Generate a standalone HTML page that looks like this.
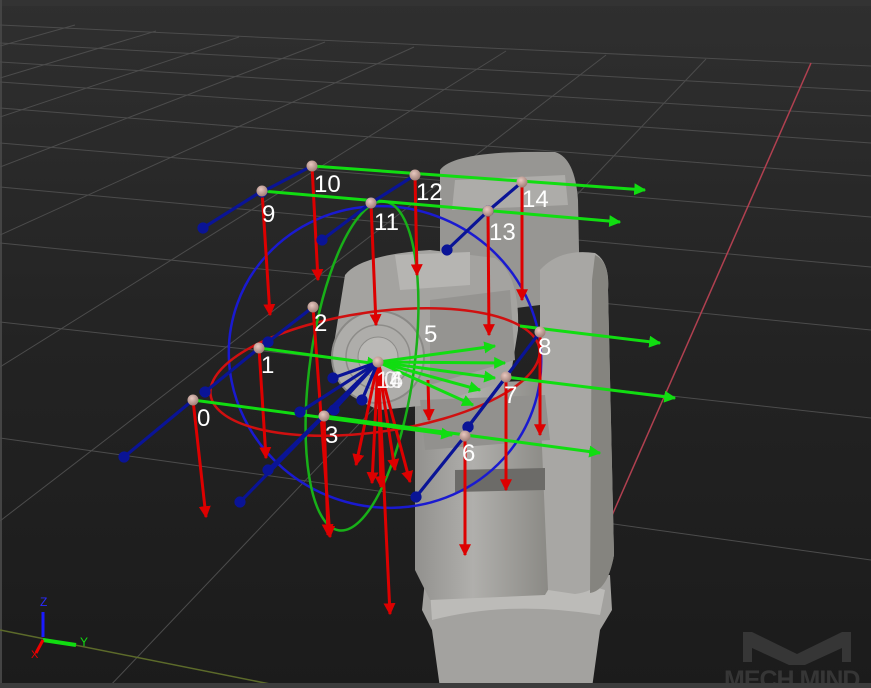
<!DOCTYPE html>
<html><head><meta charset="utf-8"><style>
html,body{margin:0;padding:0;background:#1c1c1c;}
svg{display:block}
text{font-family:"Liberation Sans","DejaVu Sans",sans-serif;}
</style></head><body>
<svg width="871" height="688" viewBox="0 0 871 688" xmlns="http://www.w3.org/2000/svg">
<defs>
<linearGradient id="bg" x1="0" y1="0" x2="0" y2="1">
<stop offset="0" stop-color="#2f2f2f"/><stop offset="0.5" stop-color="#232323"/><stop offset="1" stop-color="#1b1b1b"/>
</linearGradient>
<linearGradient id="rb" x1="0" y1="0" x2="1" y2="0">
<stop offset="0" stop-color="#92918e"/><stop offset="0.4" stop-color="#b0afac"/><stop offset="1" stop-color="#85847f"/>
</linearGradient>
<radialGradient id="ball" cx="0.4" cy="0.35" r="0.7"><stop offset="0" stop-color="#e8c8c0"/><stop offset="1" stop-color="#9a7a72"/></radialGradient>
<marker id="ar" viewBox="0 0 10 10" refX="9" refY="5" markerWidth="4" markerHeight="4" orient="auto"><path d="M0,0 L10,5 L0,10 z" fill="#d00"/></marker>
<marker id="ag" viewBox="0 0 10 10" refX="9" refY="5" markerWidth="4" markerHeight="4" orient="auto"><path d="M0,0 L10,5 L0,10 z" fill="#1d1"/></marker>
<marker id="ab" viewBox="0 0 10 10" refX="5" refY="5" markerWidth="3.5" markerHeight="3.5" orient="auto"><circle cx="5" cy="5" r="5" fill="#0a1496"/></marker>
</defs>
<rect width="871" height="688" fill="url(#bg)"/>
<rect width="871" height="6" fill="#333"/>
<rect y="0" width="2" height="688" fill="#444"/>
<g stroke="#4c4c4c" stroke-width="1" fill="none">
<line x1="0" y1="25" x2="871" y2="66"/>
<line x1="0" y1="43" x2="871" y2="91"/>
<line x1="0" y1="62" x2="871" y2="116"/>
<line x1="0" y1="82" x2="871" y2="143"/>
<line x1="0" y1="108" x2="871" y2="176"/>
<line x1="0" y1="143" x2="871" y2="217"/>
<line x1="0" y1="187" x2="871" y2="267"/>
<line x1="0" y1="243" x2="871" y2="330"/>
<line x1="0" y1="322" x2="871" y2="418"/>
<line x1="0" y1="438" x2="871" y2="560"/>
<line x1="75" y1="25" x2="0" y2="46"/>
<line x1="156" y1="31" x2="0" y2="78"/>
<line x1="239" y1="37" x2="0" y2="117"/>
<line x1="325" y1="42" x2="0" y2="167"/>
<line x1="414" y1="47" x2="0" y2="235"/>
<line x1="506" y1="51" x2="0" y2="367"/>
<line x1="606" y1="55" x2="0" y2="521"/>
<line x1="706" y1="59" x2="108" y2="688"/>
</g>
<line x1="0" y1="630" x2="290" y2="688" stroke="#5c6a2a" stroke-width="1.5"/>
<line x1="811" y1="63" x2="610" y2="520" stroke="#b04050" stroke-width="1.5"/>
<!-- robot -->
<g>
<path d="M425,580 L610,575 L612,610 L600,630 L592,688 L440,688 L432,630 L422,610 Z" fill="#a3a29f"/>
<path d="M430,590 Q510,560 605,590 L600,615 Q510,600 432,620 Z" fill="#bcbbb8"/>
<path d="M415,385 L555,380 L560,570 L545,595 L430,600 L415,570 Z" fill="url(#rb)"/>
<path d="M440,170 Q455,150 555,152 Q575,158 578,200 L580,300 L500,310 L440,280 Z" fill="#979693"/>
<path d="M455,180 L565,175 L568,205 L452,210 Z" fill="#adaca9"/>
<path d="M540,270 Q560,248 595,253 Q610,262 608,290 L614,555 Q608,590 575,594 L548,590 L540,400 Z" fill="#a8a7a4"/>
<path d="M595,255 Q610,262 608,290 L614,555 Q608,590 590,593 L592,280 Z" fill="#85847f"/>
<path d="M345,275 Q360,255 430,250 L495,258 Q520,275 518,330 L510,380 L430,405 L380,410 Q335,395 333,350 Z" fill="#a4a3a0"/>
<path d="M395,255 L470,252 L470,285 L400,290 Z" fill="#b6b5b2"/>
<path d="M430,300 L510,290 L515,360 L430,385 Z" fill="#959491"/>
<circle cx="378" cy="357" r="46" fill="#aeadaa" stroke="#8a8986" stroke-width="2"/>
<circle cx="378" cy="357" r="32" fill="none" stroke="#8d8c89" stroke-width="1.5"/>
<circle cx="378" cy="357" r="20" fill="#bab9b6" stroke="#8d8c89"/>
<path d="M420,400 L545,395 L550,440 L425,450 Z" fill="#92918e"/>
<path d="M455,470 L545,468 L545,490 L455,492 Z" fill="#6c6b68"/>
</g>
<!-- ellipses -->
<g fill="none" stroke-width="2.5">
<ellipse cx="385" cy="357" rx="157" ry="150" transform="rotate(20 385 357)" stroke="#1a1ad0"/>
<ellipse cx="375" cy="372" rx="166" ry="60" transform="rotate(-8 375 372)" stroke="#d01010"/>
<ellipse cx="362" cy="366" rx="52" ry="166" transform="rotate(8 362 366)" stroke="#18b018"/>
</g>
<!-- red arrows -->
<g stroke="#d00" stroke-width="3" marker-end="url(#ar)">
<line x1="193" y1="400" x2="206" y2="517"/>
<line x1="259" y1="348" x2="266" y2="458"/>
<line x1="313" y1="307" x2="330" y2="537"/>
<line x1="324" y1="416" x2="328" y2="535"/>
<line x1="465" y1="436" x2="465" y2="555"/>
<line x1="506" y1="377" x2="506" y2="490"/>
<line x1="540" y1="332" x2="540" y2="435"/>
<line x1="262" y1="191" x2="270" y2="315"/>
<line x1="312" y1="166" x2="318" y2="280"/>
<line x1="371" y1="203" x2="376" y2="325"/>
<line x1="415" y1="175" x2="417" y2="275"/>
<line x1="488" y1="211" x2="489" y2="335"/>
<line x1="522" y1="182" x2="522" y2="300"/>
<line x1="378" y1="362" x2="356" y2="465"/>
<line x1="378" y1="362" x2="372" y2="483"/>
<line x1="378" y1="362" x2="381" y2="487"/>
<line x1="378" y1="362" x2="390" y2="614"/>
<line x1="378" y1="362" x2="395" y2="470"/>
<line x1="378" y1="362" x2="410" y2="482"/>
<line x1="428" y1="380" x2="429" y2="420"/>
</g>
<!-- green arrows -->
<g stroke="#1d1" stroke-width="3" marker-end="url(#ag)">
<line x1="193" y1="400" x2="452" y2="435"/>
<line x1="259" y1="348" x2="378" y2="364"/>
<line x1="324" y1="416" x2="600" y2="453"/>
<line x1="506" y1="377" x2="675" y2="398"/>
<line x1="520" y1="326" x2="660" y2="343"/>
<line x1="262" y1="191" x2="620" y2="222"/>
<line x1="312" y1="166" x2="645" y2="190"/>
<line x1="378" y1="362" x2="495" y2="346"/>
<line x1="378" y1="362" x2="505" y2="363"/>
<line x1="378" y1="362" x2="495" y2="378"/>
<line x1="378" y1="362" x2="480" y2="390"/>
<line x1="378" y1="362" x2="473" y2="405"/>
</g>
<!-- blue arrows -->
<g stroke="#0a1496" stroke-width="3.2" marker-end="url(#ab)">
<line x1="193" y1="400" x2="124" y2="457"/>
<line x1="259" y1="348" x2="205" y2="392"/>
<line x1="313" y1="307" x2="268" y2="342"/>
<line x1="324" y1="416" x2="240" y2="502"/>
<line x1="465" y1="436" x2="416" y2="497"/>
<line x1="540" y1="332" x2="468" y2="427"/>
<line x1="506" y1="377" x2="468" y2="427"/>
<line x1="262" y1="191" x2="203" y2="228"/>
<line x1="312" y1="166" x2="262" y2="192"/>
<line x1="371" y1="203" x2="322" y2="240"/>
<line x1="415" y1="175" x2="371" y2="203"/>
<line x1="488" y1="211" x2="447" y2="250"/>
<line x1="522" y1="182" x2="488" y2="211"/>
<line x1="378" y1="362" x2="333" y2="378"/>
<line x1="378" y1="362" x2="300" y2="412"/>
<line x1="378" y1="362" x2="268" y2="470"/>
<line x1="378" y1="362" x2="362" y2="400"/>
<line x1="378" y1="362" x2="334" y2="410"/>
</g>
<!-- balls -->
<g fill="url(#ball)">
<circle cx="193" cy="400" r="5.5"/><circle cx="259" cy="348" r="5.5"/><circle cx="313" cy="307" r="5.5"/>
<circle cx="324" cy="416" r="5.5"/><circle cx="465" cy="436" r="5.5"/><circle cx="506" cy="377" r="5.5"/>
<circle cx="540" cy="332" r="5.5"/><circle cx="262" cy="191" r="5.5"/><circle cx="312" cy="166" r="5.5"/>
<circle cx="371" cy="203" r="5.5"/><circle cx="415" cy="175" r="5.5"/><circle cx="488" cy="211" r="5.5"/>
<circle cx="522" cy="182" r="5.5"/><circle cx="378" cy="362" r="5.5"/>
</g>
<g fill="#fff" font-size="24">
<text x="197" y="426">0</text><text x="261" y="373">1</text><text x="314" y="331">2</text>
<text x="325" y="443">3</text><text x="424" y="342">5</text><text x="462" y="461">6</text>
<text x="504" y="403">7</text><text x="538" y="355">8</text><text x="262" y="222">9</text>
<text x="314" y="192">10</text><text x="374" y="230">11</text><text x="416" y="200">12</text>
<text x="489" y="240">13</text><text x="522" y="207">14</text>
<text x="376" y="388" opacity="0.9">14</text><text x="384" y="388" opacity="0.8">0</text><text x="390" y="388" opacity="0.8">6</text>
</g>
<!-- axis -->
<line x1="43" y1="637" x2="43" y2="612" stroke="#1a1aff" stroke-width="3"/>
<text x="40" y="606" fill="#2a2aff" font-size="12">Z</text>
<line x1="43" y1="640" x2="76" y2="645" stroke="#1d1" stroke-width="4"/>
<text x="80" y="646" fill="#1d1" font-size="12">Y</text>
<line x1="43" y1="640" x2="36" y2="653" stroke="#e00" stroke-width="3"/>
<text x="31" y="658" fill="#e00" font-size="11">X</text>
<!-- watermark -->
<g fill="#363636">
<path d="M743,632 L752,632 L797,654 L842,632 L851,632 L851,662 L842,662 L842,648 L805,665 L789,665 L752,648 L752,662 L743,662 Z"/>
<text x="724" y="688" font-size="25" font-weight="bold" letter-spacing="-1">MECH MIND</text>
</g>
<rect y="683" width="871" height="5" fill="#3c3c3c"/>
</svg>
</body></html>
